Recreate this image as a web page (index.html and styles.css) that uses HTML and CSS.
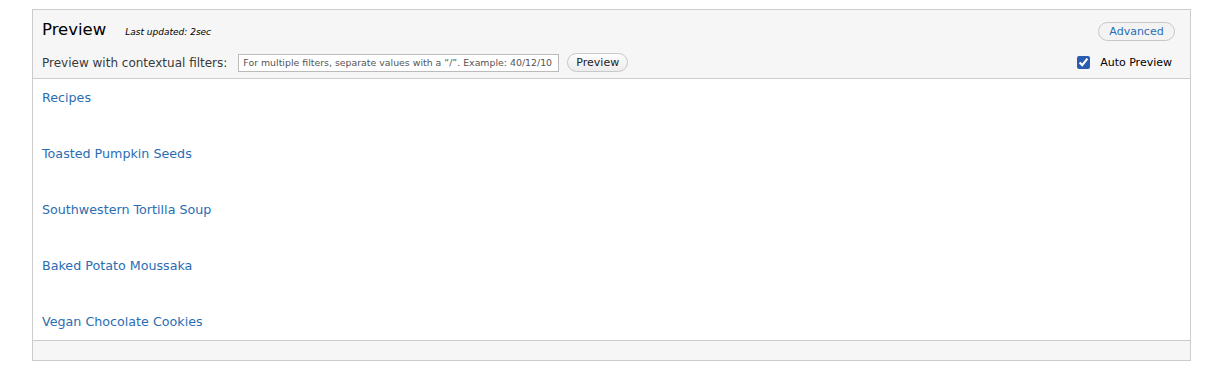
FILE: index.html
```html
<!DOCTYPE html>
<html lang="en">
<head>
  <meta charset="UTF-8" />
  <title>Preview</title>
  <link rel="stylesheet" href="styles.css">
</head>
<body>
  <div class="preview">
    <div class="preview-header">
      <div class="header-left">
        <div class="title-row">
          <h1>Preview</h1>
          <span class="updated">Last updated: 2sec</span>
        </div>
        <form class="filters">
          <label for="args">Preview with contextual filters:</label>
          <input type="text" id="args" placeholder="For multiple filters, separate values with a “/”. Example: 40/12/10" />
          <button type="button" class="btn">Preview</button>
        </form>
      </div>
      <div class="header-right">
        <button type="button" class="btn btn-link">Advanced</button>
        <label class="auto">
          <input type="checkbox" checked />
          <span>Auto Preview</span>
        </label>
      </div>
    </div>

    <div class="preview-content">
      <div class="row"><a href="#">Recipes</a></div>
      <div class="row"><a href="#">Toasted Pumpkin Seeds</a></div>
      <div class="row"><a href="#">Southwestern Tortilla Soup</a></div>
      <div class="row"><a href="#">Baked Potato Moussaka</a></div>
      <div class="row"><a href="#">Vegan Chocolate Cookies</a></div>
    </div>

    <div class="preview-footer"></div>
  </div>
</body>
</html>
```

FILE: styles.css
```css
body {
  font-family: "DejaVu Sans", Verdana, sans-serif;
  background: #fff;
  margin: 9px 37px 0 32px;
  color: #333;
}
.preview {
  border: 1px solid #ccc;
}
.preview-header {
  background: #f6f6f6;
  border-bottom: 1px solid #ccc;
  display: flex;
  justify-content: space-between;
  padding: 0 15px 0 9px;
  height: 68px;
}
.title-row {
  display: flex;
  align-items: baseline;
  gap: 19px;
  padding-top: 9px;
  height: 22px;
}
h1 {
  font-size: 16.5px;
  font-weight: normal;
  color: #000;
  margin: 0;
  line-height: 22px;
}
.updated {
  font-size: 9px;
  font-style: italic;
  color: #000;
}
.filters {
  display: flex;
  align-items: center;
  margin-top: 12px;
}
.filters label {
  font-size: 12px;
  color: #3a3a3a;
  margin-right: 11px;
}
.filters input {
  width: 321px;
  height: 18px;
  box-sizing: border-box;
  border: 1px solid #bbb;
  font-family: inherit;
  font-size: 9.4px;
  padding: 0 4px;
  margin-right: 8px;
}
.filters input::placeholder {
  color: #555;
}
.btn {
  font-family: inherit;
  font-size: 11px;
  color: #222;
  background: linear-gradient(#fdfdfd, #ececec);
  border: 1px solid #c8c8c8;
  border-radius: 10px;
  height: 19px;
  padding: 0 8px;
  cursor: pointer;
}
.btn-link {
  color: #2a6eb5;
  background: #f3f3f3;
  width: 77px;
}
.header-right {
  display: flex;
  flex-direction: column;
  align-items: flex-end;
  padding-top: 12px;
}
.auto {
  display: flex;
  align-items: center;
  gap: 10px;
  font-size: 11px;
  color: #000;
  margin-top: 15px;
  margin-right: 3px;
}
.auto input {
  margin: 0;
  width: 13px;
  height: 13px;
  accent-color: #2a5db0;
}
.preview-content {
  background: #fff;
  padding: 9px 9px 10px;
}
.row {
  height: 18px;
  line-height: 18px;
  margin-bottom: 38px;
}
.row:last-child {
  margin-bottom: 0;
}
.row a {
  color: #2a6db3;
  text-decoration: none;
  font-size: 12.7px;
}
.preview-footer {
  background: #f6f6f6;
  border-top: 1px solid #ccc;
  height: 19px;
}
```
